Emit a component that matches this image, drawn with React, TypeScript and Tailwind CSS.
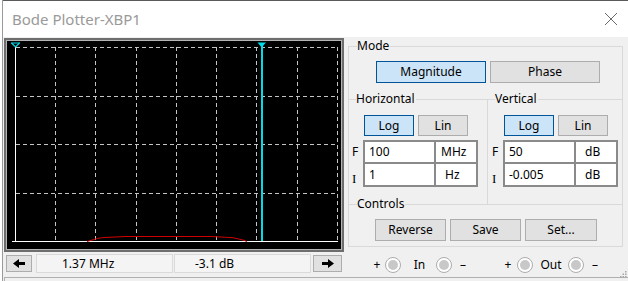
import clsx from "clsx";

const CYAN = "#00dcec";

function Legend({ label, lead }: { label: string; lead: string }) {
  return (
    <div className="-mt-[8px] flex h-[16px] items-center">
      <div className={clsx(lead, "h-px bg-[#d9d9d9]")} />
      <span className="pr-[1px] leading-none text-black">{label}</span>
      <div className="h-px flex-1 bg-[#d9d9d9]" />
    </div>
  );
}

function Btn({ children, active, className }: { children: React.ReactNode; active?: boolean; className?: string }) {
  return (
    <div
      className={clsx(
        "flex items-center justify-center border leading-none text-black",
        active ? "border-[#005499] bg-[#cce4f7]" : "border-[#adadad] bg-[#e1e1e1]",
        className
      )}
    >
      {children}
    </div>
  );
}

function Fields({ top, bottom }: { top: [string, string, string]; bottom: [string, string, string] }) {
  const cell = "flex items-center bg-white leading-none text-black";
  return (
    <div className="grid grid-cols-[69px_40px] grid-rows-[20px_21px] gap-[2px] border-2 border-[#8a8a8a] bg-[#8a8a8a]">
      <div className={clsx(cell, "pl-[4px]")}>{top[0]}</div>
      <div className={clsx(cell, top[2])}>{top[1]}</div>
      <div className={clsx(cell, "pl-[4px]")}>{bottom[0]}</div>
      <div className={clsx(cell, bottom[2])}>{bottom[1]}</div>
    </div>
  );
}

function FiLabels() {
  return (
    <div className="flex w-[11px] flex-col text-black">
      <div className="flex h-[24px] items-center leading-none">F</div>
      <div className="flex h-[23px] items-end pb-[2px] font-['Liberation_Serif',serif] text-[13px] leading-none">I</div>
    </div>
  );
}

function Terminal() {
  return (
    <div className="h-[16px] w-[16px] rounded-full border border-[#acacac] bg-white p-[2px]">
      <div className="h-full w-full rounded-full bg-[#c8c8c8]" />
    </div>
  );
}

function Arrow({ right }: { right?: boolean }) {
  return (
    <svg width="12" height="9" viewBox="0 0 12 9" className={right ? "-scale-x-100" : ""}>
      <path d="M0 4.5 L6 0 V3 H12 V6 H6 V9 Z" fill="#000" />
    </svg>
  );
}

function Plot() {
  const xs = [48.5, 88.5, 129.5, 169.5, 209.5, 249.5, 290.5, 330.5];
  const ys = [6.5, 55.5, 103.5, 152.5];
  return (
    <svg width="334" height="208" viewBox="0 0 334 208" className="block">
      {xs.map((x) => (
        <line key={x} x1={x} y1={6} x2={x} y2={200} stroke="#c4c4c4" strokeWidth={1} strokeDasharray="4 3" />
      ))}
      {ys.map((y) => (
        <line key={y} x1={9} y1={y} x2={331} y2={y} stroke="#c4c4c4" strokeWidth={1} strokeDasharray="4 3" />
      ))}
      <line x1={8.5} y1={6} x2={8.5} y2={200} stroke="#fff" strokeWidth={1} />
      <line x1={5} y1={200.5} x2={331} y2={200.5} stroke="#fff" strokeWidth={1} />
      <polyline
        points="80,200.5 89.7,197.7 94.7,196.7 118,195.5 204.7,195.5 226,196.7 236,199 240,200.5"
        fill="none"
        stroke="#d00000"
        strokeWidth={1}
      />
      <path d="M4.5 2 L8.5 6 L12.5 2" fill="none" stroke={CYAN} strokeWidth={1.2} />
      <line x1={4} y1={2} x2={13} y2={2} stroke={CYAN} strokeWidth={1} />
      <path d="M250.5 1.5 H259 L254.7 6.5 Z" fill={CYAN} />
      <line x1={255} y1={5} x2={255} y2={200} stroke={CYAN} strokeWidth={2} />
    </svg>
  );
}

export default function App() {
  return (
    <div className="relative h-[281px] w-[628px] overflow-hidden bg-white pl-[2px] font-['Segoe_UI','Noto_Sans','Open_Sans',sans-serif] text-[12px]">
      <div className="flex h-full flex-col border-l border-[#9a9a9a]">
        <div className="flex h-[37px] shrink-0 items-center justify-between border-t border-[#5a5a5a] bg-white pl-[9px] pr-[10px]">
          <span className="text-[15px] leading-none text-[#9a9a9a]">Bode Plotter-XBP1</span>
          <svg width="14" height="14" viewBox="0 0 14 14">
            <path d="M1 1 L13 13 M13 1 L1 13" stroke="#6a6a6a" strokeWidth={1} />
          </svg>
        </div>

        <div className="flex flex-1 flex-col bg-[#f0f0f0]">
          <div className="flex h-[240px]">
            <div className="flex w-[345px] flex-col">
              <div className="ml-[1px] mt-[1px] h-[214px] w-[340px] border-2 border-[#6e6e6e]">
                <div className="h-full w-full border border-[#b4b4b4] bg-black">
                  <Plot />
                </div>
              </div>
              <div className="mt-[2px] flex h-[19px] items-center">
                <Btn className="ml-[3px] h-[17px] w-[26px]">
                  <Arrow />
                </Btn>
                <div className="ml-[4px] flex h-[19px] w-[137px] items-center border border-[#dadada] bg-[#f4f4f4] pl-[25px] leading-none text-black">
                  1.37 MHz
                </div>
                <div className="ml-[1px] flex h-[19px] w-[137px] items-center border border-[#dadada] bg-[#f4f4f4] pl-[20px] leading-none text-black">
                  -3.1 dB
                </div>
                <Btn className="ml-[2px] h-[17px] w-[29px]">
                  <Arrow right />
                </Btn>
              </div>
            </div>

            <div className="flex w-[275px] flex-col">
              <div className="mt-[9px] flex flex-col border-b border-l border-r border-[#d9d9d9] pb-[5px]">
                <Legend label="Mode" lead="w-[8px]" />
                <div className="mt-[7px] flex gap-[4px] pl-[27px]">
                  <Btn active className="h-[22px] w-[110px]">Magnitude</Btn>
                  <Btn className="h-[22px] w-[110px]">Phase</Btn>
                </div>
                <div className="mt-[16px] flex h-[105px]">
                  <div className="flex w-[138px] flex-col">
                    <Legend label="Horizontal" lead="w-[7px]" />
                    <div className="mt-[8px] flex gap-[4px] pl-[15px]">
                      <Btn active className="h-[21px] w-[50px]">Log</Btn>
                      <Btn className="h-[21px] w-[50px]">Lin</Btn>
                    </div>
                    <div className="mt-[4px] flex pl-[3px]">
                      <FiLabels />
                      <Fields top={["100", "MHz", "pl-[5px]"]} bottom={["1", "Hz", "pl-[9px]"]} />
                    </div>
                  </div>
                  <div className="flex flex-1 flex-col border-l border-[#d9d9d9]">
                    <Legend label="Vertical" lead="w-[7px]" />
                    <div className="mt-[8px] flex gap-[4px] pl-[16px]">
                      <Btn active className="h-[21px] w-[50px]">Log</Btn>
                      <Btn className="h-[21px] w-[50px]">Lin</Btn>
                    </div>
                    <div className="mt-[4px] flex pl-[4px]">
                      <FiLabels />
                      <Fields top={["50", "dB", "pl-[9px]"]} bottom={["-0.005", "dB", "pl-[9px]"]} />
                    </div>
                  </div>
                </div>
                <Legend label="Controls" lead="w-[8px]" />
                <div className="mt-[7px] flex gap-[4px] pl-[26px]">
                  <Btn className="h-[22px] w-[71px]">Reverse</Btn>
                  <Btn className="h-[22px] w-[71px]">Save</Btn>
                  <Btn className="h-[22px] w-[72px]">Set...</Btn>
                </div>
              </div>

              <div className="mt-[10px] flex h-[16px] items-center pl-[24px] leading-none text-black">
                <span className="w-[10px] text-center">+</span>
                <div className="ml-[3px]"><Terminal /></div>
                <span className="ml-[8px] w-[21px] text-center">In</span>
                <div className="ml-[6px]"><Terminal /></div>
                <span className="ml-[5px] w-[12px] text-center">–</span>
                <span className="ml-[34px] w-[10px] text-center">+</span>
                <div className="ml-[4px]"><Terminal /></div>
                <span className="ml-[5px] w-[26px] text-center">Out</span>
                <div className="ml-[4px]"><Terminal /></div>
                <span className="ml-[5px] w-[12px] text-center">–</span>
              </div>
            </div>
          </div>

          <div className="ml-[1px] h-[4px] border-l border-t border-[#b0b0b0]" />
        </div>
      </div>

      <svg width="7" height="7" viewBox="0 0 7 7" className="absolute bottom-[3px] right-[1px]">
        <rect x="5" y="0" width="1.5" height="1.5" fill="#a8a8a8" />
        <rect x="2.5" y="2.5" width="1.5" height="1.5" fill="#a8a8a8" />
        <rect x="5" y="2.5" width="1.5" height="1.5" fill="#a8a8a8" />
        <rect x="0" y="5" width="1.5" height="1.5" fill="#a8a8a8" />
        <rect x="2.5" y="5" width="1.5" height="1.5" fill="#a8a8a8" />
        <rect x="5" y="5" width="1.5" height="1.5" fill="#a8a8a8" />
      </svg>
    </div>
  );
}
